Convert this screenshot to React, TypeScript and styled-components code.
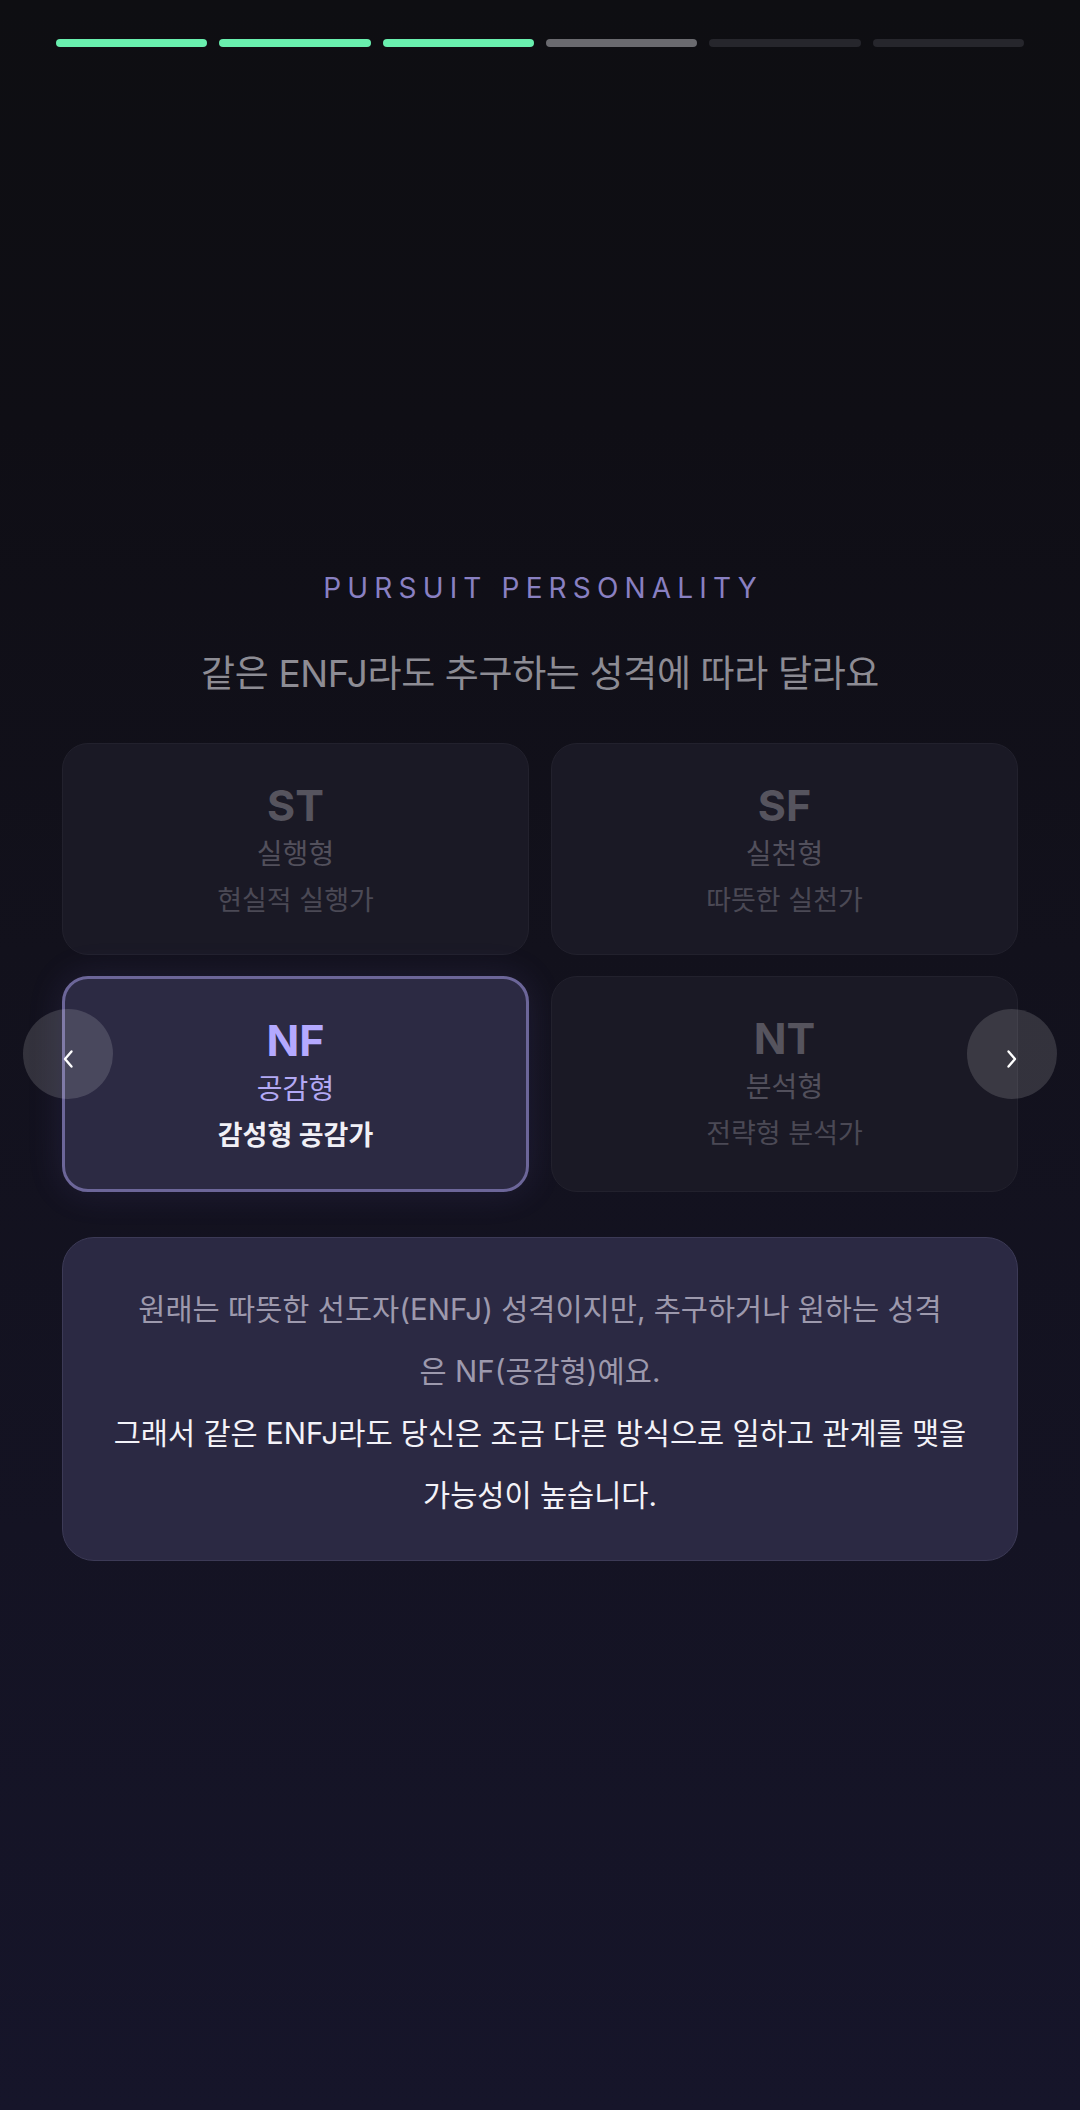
import React from 'react'
import styled, { createGlobalStyle, css } from 'styled-components'

type SegmentState = 'done' | 'current' | 'todo'

const segments: SegmentState[] = ['done', 'done', 'done', 'current', 'todo', 'todo']

const cards = [
  { id: 'st', code: 'ST', name: '실행형', desc: '현실적 실행가', active: false },
  { id: 'sf', code: 'SF', name: '실천형', desc: '따뜻한 실천가', active: false },
  { id: 'nf', code: 'NF', name: '공감형', desc: '감성형 공감가', active: true },
  { id: 'nt', code: 'NT', name: '분석형', desc: '전략형 분석가', active: false },
]

const GlobalStyle = createGlobalStyle`
  html, body {
    margin: 0;
    padding: 0;
    background: #0e0e12;
  }
  * {
    box-sizing: border-box;
  }
  body {
    font-family: Inter, "Noto Sans CJK KR", sans-serif;
  }
`

export default function App() {
  return (
    <>
      <GlobalStyle />
      <Page>
        <Progress>
          {segments.map((s, i) => (
            <Segment key={i} $state={s} />
          ))}
        </Progress>

        <Main>
          <Eyebrow>PURSUIT PERSONALITY</Eyebrow>
          <Subtitle>같은 ENFJ라도 추구하는 성격에 따라 달라요</Subtitle>

          <CardArea>
            <CardGrid>
              {cards.map((c) => (
                <Card key={c.id} $active={c.active}>
                  <Code $active={c.active}>{c.code}</Code>
                  <TypeName $active={c.active}>{c.name}</TypeName>
                  <TypeDesc $active={c.active}>{c.desc}</TypeDesc>
                </Card>
              ))}
            </CardGrid>
            <NavButton $side="left" aria-label="이전">
              <svg width="12" height="20" viewBox="0 0 12 20" fill="none">
                <path d="M9.5 2.5 L3 10 L9.5 17.5" stroke="#ffffff" strokeWidth="2.4" strokeLinecap="round" strokeLinejoin="round" />
              </svg>
            </NavButton>
            <NavButton $side="right" aria-label="다음">
              <svg width="12" height="20" viewBox="0 0 12 20" fill="none">
                <path d="M2.5 2.5 L9 10 L2.5 17.5" stroke="#ffffff" strokeWidth="2.4" strokeLinecap="round" strokeLinejoin="round" />
              </svg>
            </NavButton>
          </CardArea>

          <InfoBox>
            <InfoText $tone="muted">
              원래는 따뜻한 선도자(ENFJ) 성격이지만, 추구하거나 원하는 성격
              <br />은 NF(공감형)예요.
            </InfoText>
            <InfoText $tone="bright">
              그래서 같은 ENFJ라도 당신은 조금 다른 방식으로 일하고 관계를 맺을 가능성이 높습니다.
            </InfoText>
          </InfoBox>
        </Main>
      </Page>
    </>
  )
}

const Page = styled.div`
  min-height: 2110px;
  display: flex;
  flex-direction: column;
  background: linear-gradient(180deg, #0e0e12 0%, #0f0e15 20%, #12111c 45%, #16152a 100%);
`

const Progress = styled.div`
  display: flex;
  gap: 12px;
  padding: 39px 56px 0;
`

const Segment = styled.div<{ $state: SegmentState }>`
  flex: 1;
  height: 8px;
  border-radius: 4px;
  background: ${({ $state }) =>
    $state === 'done' ? '#69efae' : $state === 'current' ? '#6a6a6f' : '#26262c'};
`

const Main = styled.main`
  display: flex;
  flex-direction: column;
  align-items: stretch;
  padding-top: 525px;
`

const Eyebrow = styled.div`
  text-align: center;
  font-size: 28px;
  line-height: 32px;
  letter-spacing: 0.22em;
  color: #8980c2;
  padding-left: 0.22em;
`

const Subtitle = styled.h2`
  margin: 48px 0 0;
  text-align: center;
  font-size: 37px;
  line-height: 44px;
  font-weight: 400;
  color: #8d8c94;
  letter-spacing: -0.01em;
`

const CardArea = styled.div`
  position: relative;
  margin-top: 47px;
  padding: 0 62px;
`

const CardGrid = styled.div`
  display: grid;
  grid-template-columns: 1fr 1fr;
  gap: 21px 22px;
`

const Card = styled.div<{ $active: boolean }>`
  display: flex;
  flex-direction: column;
  align-items: center;
  padding: 36px 0 30px;
  border-radius: 26px;
  background: #1a1925;
  border: 1px solid #22212d;
  ${({ $active }) =>
    $active &&
    css`
      background: #2c2a43;
      border: 3px solid #6c6699;
      box-shadow: 0 0 36px rgba(120, 108, 210, 0.14);
    `}
`

const Code = styled.div<{ $active: boolean }>`
  font-size: 43px;
  line-height: 50px;
  font-weight: 700;
  color: ${({ $active }) => ($active ? '#b4a9ff' : '#56545e')};
`

const TypeName = styled.div<{ $active: boolean }>`
  font-size: 28px;
  line-height: 48px;
  color: ${({ $active }) => ($active ? '#b3a9f4' : '#52505c')};
`

const TypeDesc = styled.div<{ $active: boolean }>`
  font-size: 27px;
  line-height: 46px;
  font-weight: ${({ $active }) => ($active ? 700 : 400)};
  color: ${({ $active }) => ($active ? '#f1f0f6' : '#4b4955')};
`

const NavButton = styled.button<{ $side: 'left' | 'right' }>`
  position: absolute;
  top: 266px;
  ${({ $side }) => ($side === 'left' ? 'left: 23px;' : 'right: 23px;')}
  width: 90px;
  height: 90px;
  border: none;
  border-radius: 50%;
  background: rgba(255, 255, 255, 0.14);
  display: flex;
  align-items: center;
  justify-content: center;
  padding: 9px 0 0;
  cursor: pointer;
`

const InfoBox = styled.section`
  margin: 45px 62px 0;
  padding: 40px 36px 34px;
  border-radius: 32px;
  background: #2b2943;
  border: 1px solid #3c3a56;
  text-align: center;
`

const InfoText = styled.p<{ $tone: 'muted' | 'bright' }>`
  margin: 0;
  font-size: 29.5px;
  line-height: 62px;
  word-break: keep-all;
  color: ${({ $tone }) => ($tone === 'muted' ? '#9d99ad' : '#f3f2f8')};
`
